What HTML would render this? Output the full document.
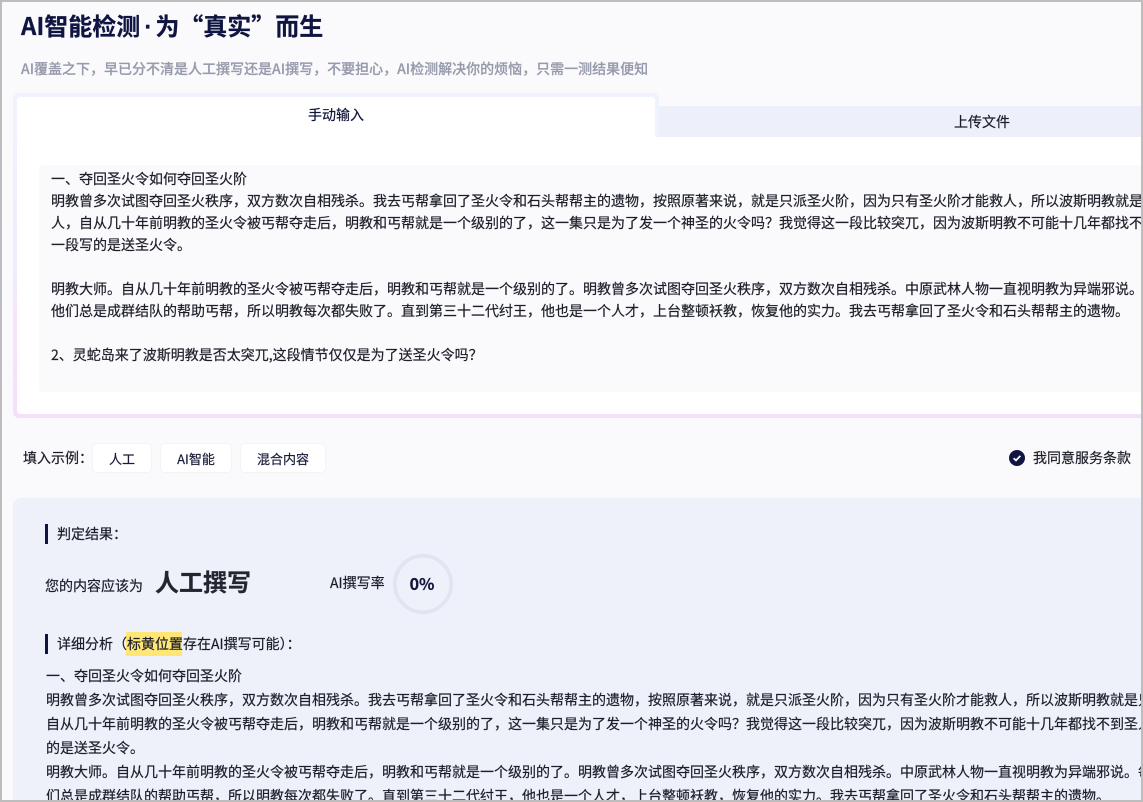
<!DOCTYPE html>
<html lang="zh-CN"><head><meta charset="utf-8"><title>AI智能检测</title>
<style>
html,body{margin:0;padding:0;width:1143px;height:802px;overflow:hidden;background:#fafafd}
body{position:relative;font-family:"Noto Sans CJK SC","Liberation Sans",sans-serif;color:#1c1e28;font-size:14px;-webkit-text-stroke:.2px currentColor}
.clip{position:absolute;left:0;top:0;width:1141px;height:800px;overflow:hidden}
.a{position:absolute;white-space:nowrap}
.t{line-height:20px;height:20px}
.card{left:13px;top:137px;width:1128px;height:281px;background:linear-gradient(#eef3fe 0,#f6dffb 100%);border-radius:0 0 0 6px}
.btn{top:443px;height:30px;line-height:29px;background:#fff;border:1px solid #f3f3f6;box-sizing:border-box;border-radius:5px;text-align:center;color:#1a1d3a;font-size:13px}
.bar{left:45px;width:3px;height:20px;background:#0f1440}
pre.a{margin:0;font:inherit;white-space:pre;color:#1c1e28}
</style></head><body>
<div class="clip">
<div class="a t" style="left:21px;top:8px;height:34px;line-height:34px;font-size:24px;font-weight:700;color:#0f1440">AI智能检测<span style="font-family:'Liberation Sans',sans-serif;margin:0 3px 0 4px">·</span>为“真实”而生</div>
<div class="a t" style="left:21px;top:59px;color:#969aab;font-weight:500">AI覆盖之下，早已分不清是人工撰写还是AI撰写，不要担心，AI检测解决你的烦恼，只需一测结果便知</div>

<div class="a" style="left:655px;top:106px;width:486px;height:31px;background:#edf0fb"></div>
<div class="a t" style="left:954px;top:112px;color:#1c1e28">上传文件</div>
<div class="a" style="left:13px;top:93px;width:646px;height:44px;background:#eef3fe;border-radius:6px 6px 0 0"></div>
<div class="a card"></div>
<div class="a" style="left:17px;top:137px;width:1124px;height:277px;background:#fff;border-radius:0 0 0 4px"></div>
<div class="a" style="left:17px;top:97px;width:638px;height:41px;background:#fff;border-radius:4px 4px 0 0"></div>
<div class="a t" style="left:308px;top:105px;color:#10143a">手动输入</div>

<div class="a" style="left:39px;top:165px;width:1102px;height:227px;background:#fafafd;border-radius:4px 0 0 4px"></div>
<pre class="a" style="left:51px;top:168px;line-height:22px">一、夺回圣火令如何夺回圣火阶
明教曾多次试图夺回圣火秩序，双方数次自相残杀。我去丐帮拿回了圣火令和石头帮帮主的遗物，按照原著来说，就是只派圣火阶，因为只有圣火阶才能救人，所以波斯明教就是
人，自从几十年前明教的圣火令被丐帮夺走后，明教和丐帮就是一个级别的了，这一集只是为了发一个神圣的火令吗？我觉得这一段比较突兀，因为波斯明教不可能十几年都找不
一段写的是送圣火令。

明教大师。自从几十年前明教的圣火令被丐帮夺走后，明教和丐帮就是一个级别的了。明教曾多次试图夺回圣火秩序，双方数次自相残杀。中原武林人物一直视明教为异端邪说。
他们总是成群结队的帮助丐帮，所以明教每次都失败了。直到第三十二代纣王，他也是一个人才，上台整顿袄教，恢复他的实力。我去丐帮拿回了圣火令和石头帮帮主的遗物。

2、灵蛇岛来了波斯明教是否太突兀,这段情节仅仅是为了送圣火令吗？</pre>

<div class="a t" style="left:23px;top:448px">填入示例：</div>
<div class="a btn" style="left:92px;width:60px">人工</div>
<div class="a btn" style="left:160px;width:72px">AI智能</div>
<div class="a btn" style="left:240px;width:86px">混合内容</div>
<svg class="a" style="left:1009px;top:450px" width="16" height="16" viewBox="0 0 16 16"><circle cx="8" cy="8" r="8" fill="#0f1440"/><path d="M4.6 8.2 7 10.4 11.4 5.8" fill="none" stroke="#fff" stroke-width="1.7"/></svg>
<div class="a t" style="left:1033px;top:448px">我同意服务条款</div>

<div class="a" style="left:13px;top:498px;width:1128px;height:302px;background:#eef0fa;border-radius:8px 0 0 0"></div>
<div class="a bar" style="top:524px"></div>
<div class="a t" style="left:57px;top:524px">判定结果：</div>
<div class="a t" style="left:45px;top:576px">您的内容应该为</div>
<div class="a" style="left:155px;top:564px;font-size:24px;line-height:34px;font-weight:700;color:#23252f">人工撰写</div>
<div class="a t" style="left:330px;top:573px">AI撰写率</div>
<svg class="a" style="left:393px;top:554px" width="60" height="60" viewBox="0 0 60 60"><circle cx="30" cy="30" r="28.2" fill="none" stroke="#e3e3f1" stroke-width="3.6"/></svg>
<div class="a" style="left:392px;top:571px;width:60px;text-align:center;line-height:24px;font-size:16px;font-weight:700;color:#10143a">0%</div>

<div class="a bar" style="top:634px"></div>
<div class="a" style="left:126px;top:632px;width:56px;height:24px;background:#ffe675"></div>
<div class="a t" style="left:57px;top:634px">详细分析（标黄位置存在AI撰写可能）：</div>
<pre class="a" style="left:46px;top:664px;line-height:24px">一、夺回圣火令如何夺回圣火阶
明教曾多次试图夺回圣火秩序，双方数次自相残杀。我去丐帮拿回了圣火令和石头帮帮主的遗物，按照原著来说，就是只派圣火阶，因为只有圣火阶才能救人，所以波斯明教就是只
自从几十年前明教的圣火令被丐帮夺走后，明教和丐帮就是一个级别的了，这一集只是为了发一个神圣的火令吗？我觉得这一段比较突兀，因为波斯明教不可能十几年都找不到圣人
的是送圣火令。
明教大师。自从几十年前明教的圣火令被丐帮夺走后，明教和丐帮就是一个级别的了。明教曾多次试图夺回圣火秩序，双方数次自相残杀。中原武林人物一直视明教为异端邪说。每
们总是成群结队的帮助丐帮，所以明教每次都失败了。直到第三十二代纣王，他也是一个人才，上台整顿袄教，恢复他的实力。我去丐帮拿回了圣火令和石头帮帮主的遗物。</pre>
</div>

<div class="a" style="left:0;top:0;width:1143px;height:2px;background:#bdbdbd"></div>
<div class="a" style="left:0;top:0;width:2px;height:802px;background:#bdbdbd"></div>
<div class="a" style="left:1141px;top:0;width:2px;height:802px;background:#bdbdbd"></div>
<div class="a" style="left:0;top:800px;width:1143px;height:2px;background:#bdbdbd"></div>
</body></html>
